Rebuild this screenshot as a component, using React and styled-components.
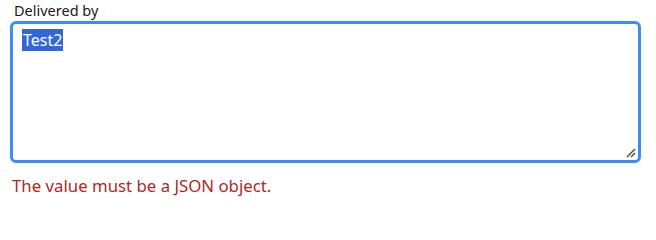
import React from "react";
import styled, { createGlobalStyle } from "styled-components";

const GlobalStyle = createGlobalStyle`
  html, body {
    margin: 0;
    padding: 0;
    background: #ffffff;
  }
  body {
    font-family: "Noto Sans", "Open Sans", sans-serif;
  }
`;

const Field = styled.div`
  display: flex;
  flex-direction: column;
  padding: 2px 15px 0 10px;
`;

const Label = styled.label`
  font-size: 14.5px;
  line-height: 17px;
  color: #1a1a1a;
  padding-left: 4px;
  margin-bottom: 2px;
`;

const TextArea = styled.div`
  position: relative;
  box-sizing: border-box;
  height: 142px;
  border: 3px solid #3c8cf6;
  border-radius: 6px;
  padding: 5px 9px;
  font-size: 16px;
  line-height: 23px;
  color: #111111;
`;

const Selected = styled.span`
  background: #3367d6;
  color: #ffffff;
  padding: 0 1px;
`;

const Grip = styled.svg`
  position: absolute;
  right: 2px;
  bottom: 2px;
`;

const ErrorText = styled.div`
  margin-top: 12px;
  padding-left: 2px;
  font-size: 16.8px;
  line-height: 22px;
  color: #b3261e;
`;

export default function App() {
  return (
    <>
      <GlobalStyle />
      <Field>
        <Label>Delivered by</Label>
        <TextArea>
          <Selected>Test2</Selected>
          <Grip width="11" height="11" viewBox="0 0 11 11">
            <path d="M10 2 L2 10 M10 6 L6 10" stroke="#4a4a4a" strokeWidth="1.5" />
          </Grip>
        </TextArea>
        <ErrorText>The value must be a JSON object.</ErrorText>
      </Field>
    </>
  );
}
